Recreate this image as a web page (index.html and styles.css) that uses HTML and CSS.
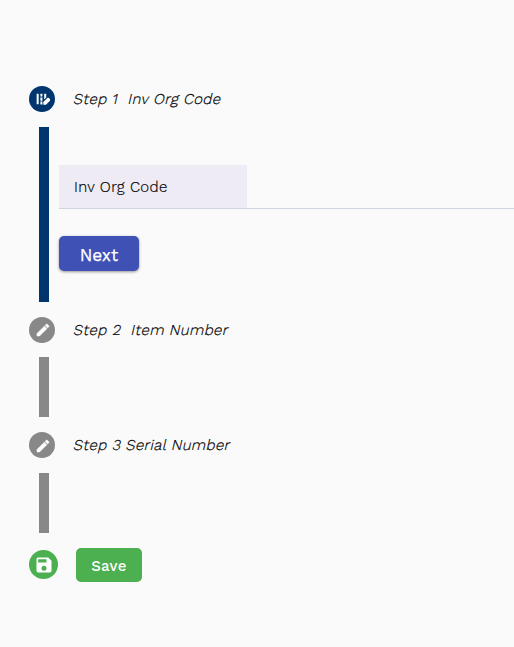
FILE: index.html
```
<!DOCTYPE html>
<html lang="en">
<head>
<meta charset="utf-8">
<title>Steps</title>
<link rel="stylesheet" href="styles.css">
</head>
<body>
<main class="stepper">
  <section class="step">
    <header class="step-head">
      <span class="dot active"><svg class="icon" viewBox="0 0 24 24"><path d="M18.3 4h-3v8.8l3-3zM4 4h3v16H4zM9.6 4h3v4.3h-3zM9.6 9.6h3v5h-3zM9.6 15.9h3v4.3h-3zM23.6 11.8l-1-1c-.8-.8-2.1-.8-2.9 0L14 16.5V20.6h4l5.6-5.6c.9-.9.9-2.3 0-3.2z"/></svg></span>
      <h2 class="label"><span class="num">Step 1</span><span class="name org">Inv Org Code</span></h2>
    </header>
    <div class="step-body open">
      <div class="field"><label class="field-label">Inv Org Code</label></div>
      <button class="next">Next</button>
    </div>
  </section>
  <section class="step">
    <header class="step-head">
      <span class="dot"><svg class="icon pencil" viewBox="0 0 24 24"><path d="M3 17.25V21h3.75L17.81 9.94l-3.75-3.75zM20.71 7.04a1 1 0 0 0 0-1.41l-2.34-2.34a1 1 0 0 0-1.41 0l-1.83 1.83 3.75 3.75z"/></svg></span>
      <h2 class="label"><span class="num">Step 2</span><span class="name item">Item Number</span></h2>
    </header>
    <div class="step-body"></div>
  </section>
  <section class="step">
    <header class="step-head">
      <span class="dot"><svg class="icon pencil" viewBox="0 0 24 24"><path d="M3 17.25V21h3.75L17.81 9.94l-3.75-3.75zM20.71 7.04a1 1 0 0 0 0-1.41l-2.34-2.34a1 1 0 0 0-1.41 0l-1.83 1.83 3.75 3.75z"/></svg></span>
      <h2 class="label"><span class="num">Step 3</span><span class="name serial">Serial Number</span></h2>
    </header>
    <div class="step-body"></div>
  </section>
  <footer class="finish">
    <span class="dot done"><svg class="icon" viewBox="0 0 24 24"><path d="M17 3H5a2 2 0 0 0-2 2v14c0 1.1.89 2 2 2h14c1.1 0 2-.9 2-2V7zm-5 16a3 3 0 1 1 0-6 3 3 0 0 1 0 6zm3-10H5V5h10z"/></svg></span>
    <button class="save">Save</button>
  </footer>
</main>
</body>
</html>
```
FILE: styles.css
```
* { box-sizing: border-box; }
body {
  margin: 0;
  background: #fafafa;
  color: #000;
  font-family: "Work Sans", Inter, sans-serif;
  overflow: hidden;
}
.stepper { padding: 86px 0 0 29px; }
.step { padding-bottom: 15px; }
.step-head { display: flex; align-items: center; height: 26px; }
.dot {
  display: flex;
  align-items: center;
  justify-content: center;
  flex: none;
  width: 26px;
  height: 26px;
  border-radius: 50%;
  background: #888;
}
.dot.active { background: #01356e; }
.icon { width: 16px; height: 16px; fill: #fff; }
.pencil { width: 16px; height: 16px; margin: 1px 0 0 1px; stroke: #fff; stroke-width: .8; }
.label {
  display: flex;
  margin: 0 0 0 19px;
  font-size: 15px;
  font-weight: 300;
  line-height: 26px;
  white-space: pre;
  -webkit-text-stroke: 0.2px #000;
  transform: skewX(-13deg);
}
.num { width: 54px; letter-spacing: 0.35px; }
.name { letter-spacing: 0.3px; }
.org { margin-left: 0.5px; }
.item { margin-left: 3.5px; }
.serial { margin-left: -1.5px; }
.step-body {
  height: 60px;
  margin: 14.6px 0 0 10px;
  border-left: 10px solid #888;
}
.step-body.open {
  height: 175px;
  padding: 38.6px 0 0 10px;
  border-color: #01356e;
}
.field { height: 44px; border-bottom: 1px solid #cfd5dc; }
.field-label {
  display: block;
  width: 187.6px;
  height: 43px;
  padding-left: 15px;
  background: #eeebf5;
  font-size: 15px;
  font-weight: 300;
  line-height: 44px;
  letter-spacing: 0.35px;
  -webkit-text-stroke: 0.2px #000;
}
button {
  display: block;
  padding: 0;
  border: 0;
  border-radius: 5px;
  color: #fff;
  font-family: inherit;
}
.next {
  width: 80px;
  height: 35px;
  margin-top: 27px;
  background: #3f51b5;
  box-shadow: 0 1px 3px rgba(0, 0, 0, .4);
  font-size: 17.3px;
  font-weight: 400;
  line-height: 38px;
  -webkit-text-stroke: 0.25px #fff;
}
.finish { display: flex; align-items: center; height: 34px; }
.dot.done { width: 29px; height: 29px; background: #4caf50; }
.done .icon { width: 20px; height: 20px; }
.save {
  width: 66px;
  height: 34px;
  margin-left: 18px;
  background: #4caf50;
  font-size: 15px;
  font-weight: 500;
  line-height: 36px;
  letter-spacing: 0.3px;
}
```
